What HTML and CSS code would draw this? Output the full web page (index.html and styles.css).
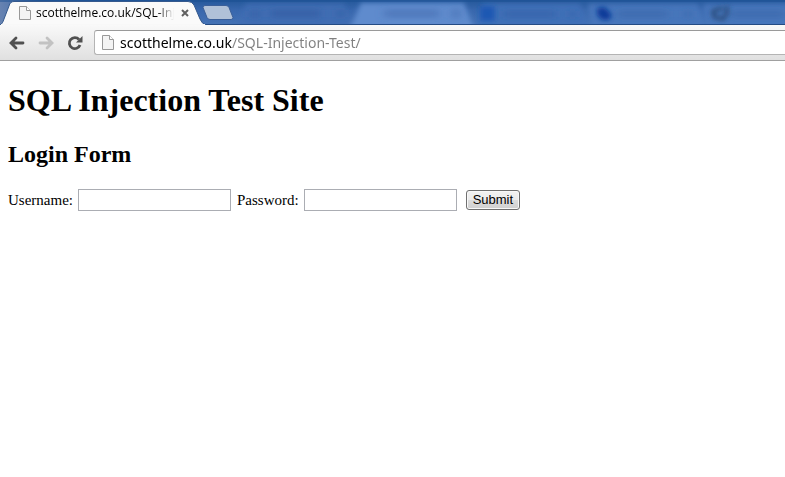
FILE: index.html
```html
<!DOCTYPE html>
<html lang="en">
<head>
<meta charset="utf-8">
<meta name="viewport" content="width=device-width, initial-scale=1">
<title>SQL Injection Test Site</title>
<link rel="stylesheet" href="styles.css">
</head>
<body>
<header class="browser">
  <div class="tabstrip">
    <svg class="backdrop" width="1600" height="25" viewBox="0 0 1600 25" aria-hidden="true">
      <defs>
        <filter id="soft" x="-20%" y="-50%" width="140%" height="200%"><feGaussianBlur stdDeviation="2.5"/></filter>
        <filter id="smudge" x="-40%" y="-80%" width="180%" height="260%"><feGaussianBlur stdDeviation="4 3"/></filter>
        <linearGradient id="left" x1="0" x2="1"><stop offset="0" stop-color="#6783b1"/><stop offset="1" stop-color="#6783b1" stop-opacity="0"/></linearGradient>
      </defs>
      <g filter="url(#soft)">
        <path d="M236 29L246 4H344L354 29z" fill="#3f6db3"/>
        <path d="M350 29L361 3H464L474 29z" fill="#5e8bcd"/>
        <path d="M474 29L484 4H580L590 29z" fill="#3f6fb7"/>
        <path d="M592 29L588 4H698L706 29z" fill="#4676bb"/>
        <path d="M707 29L703 4H1600V29z" fill="#4676bb"/>
      </g>
      <g filter="url(#smudge)">
        <path d="M250 11H260V17H250zM271 10H320V17H271zM337 10H344V17H337z" fill="#2d579c" opacity=".6"/>
        <path d="M384 10H439V17H384zM452 9H460V18H452z" fill="#3f68ab" opacity=".6"/>
        <path d="M503 11H556V17H503zM569 11H576V17H569z" fill="#2b579f" opacity=".5"/>
        <path d="M617 11H668V17H617zM684 11H692V17H684zM730 11H785V17H730z" fill="#315d9f" opacity=".5"/>
      </g>
      <g filter="url(#soft)">
        <path d="M480 6H495V21H480z" fill="#1d58b3"/>
        <path d="M597 8L605 7L612 15L609 20H602L597 15z" fill="#073a99"/>
        <path d="M723 8L713 11L714 17L723 19L727 13V6" fill="none" stroke="#24436f" stroke-width="3"/>
      </g>
      <path d="M0 0H40V25H0z" fill="url(#left)"/>
      <path d="M0 0H1600V2H0z" fill="#194e91" opacity=".45"/>
      <path d="M0 24H1600V25H0z" fill="#244b83"/>
    </svg>
    <div class="tab">
      <svg class="tab-shape" width="206" height="25" viewBox="0 0 206 25" aria-hidden="true">
        <path d="M0 25C2 24 3 22 4 19L9 6Q10 1.500 14 1.500H188Q192 1.500 194 5L200 19Q202 24 206 25z" fill="#fafafa" stroke="#35598d" stroke-width="1"/>
        <path d="M1 24.500H205" stroke="#f8f8f8"/>
      </svg>
      <svg class="page-icon" width="12" height="14" viewBox="0 0 12 14" aria-hidden="true"><path d="M.5.500H7.500L11.500 4.500V13.500H.5z" fill="#f4f4f4" stroke="#999"/><path d="M7.500.500V4.500H11.500" fill="#fff" stroke="#999"/></svg>
      <span class="tab-title">scotthelme.co.uk/SQL-Injection-Test/</span>
      <button class="tab-close" type="button" aria-label="Close tab"><svg width="8" height="8" viewBox="0 0 8 8"><path d="M1 1L7 7M7 1L1 7" stroke="#606060" stroke-width="2"/></svg></button>
    </div>
    <button class="new-tab" type="button" aria-label="New tab"><svg width="32" height="15" viewBox="0 0 32 15"><path d="M3 .5H24Q26 .5 27 2.500L31 12.500Q31 14.500 29 14.500H8Q6 14.500 5 12.500L1 2.500Q1 .5 3 .5z" fill="#b0c1d8" stroke="#3a5f99"/></svg></button>
  </div>
  <nav class="toolbar" aria-label="Navigation">
    <button class="nav-button" type="button" aria-label="Back"><svg width="16" height="14" viewBox="0 0 16 14"><path d="M7 2L2 7L7 12M2.500 7H14" fill="none" stroke="#505050" stroke-width="2.800" stroke-linecap="round"/></svg></button>
    <button class="nav-button" type="button" aria-label="Forward" disabled><svg width="16" height="14" viewBox="0 0 16 14"><path d="M9 2L14 7L9 12M13.500 7H2" fill="none" stroke="#c2c2c2" stroke-width="2.800" stroke-linecap="round"/></svg></button>
    <button class="nav-button" type="button" aria-label="Reload"><svg width="16" height="16" viewBox="0 0 16 16"><path d="M12 4.500A5.500 5.500 0 1 0 13 10" fill="none" stroke="#505050" stroke-width="2.800"/><path d="M15.500 1V7.500H9z" fill="#505050"/></svg></button>
    <div class="omnibox">
      <svg class="page-icon" width="12" height="15" viewBox="0 0 12 15" aria-hidden="true"><path d="M.5.500H7.500L11.500 4.500V14.500H.5z" fill="#f4f4f4" stroke="#999"/><path d="M7.500.500V4.500H11.500" fill="#fff" stroke="#999"/></svg>
      <input class="address" type="text" aria-label="Address" value="scotthelme.co.uk/SQL-Injection-Test/" spellcheck="false">
    </div>
  </nav>
</header>
<main class="page">
  <h1>SQL Injection Test Site</h1>
  <h2>Login Form</h2>
  <form class="login">
    <label for="username">Username:</label>
    <input class="field" id="username" type="text">
    <label for="password">Password:</label>
    <input class="field" id="password" type="password">
    <button class="submit" type="submit">Submit</button>
  </form>
</main>
</body>
</html>
```
FILE: styles.css
```css
* { box-sizing: border-box; }
body {
  margin: 0;
  background: #fff;
  color: #000;
  font-family: "Liberation Serif", serif;
  font-size: 15px;
}
svg { display: block; flex: none; }
button { font: inherit; }

.tabstrip {
  position: relative;
  display: flex;
  height: 25px;
  overflow: hidden;
  background: linear-gradient(#24589a, #3867ad 40%, #4472b5);
}
.backdrop { position: absolute; left: 0; top: 0; }
.tab {
  position: relative;
  display: flex;
  align-items: center;
  flex: none;
  width: 202px;
  padding: 1px 13px 0 19px;
}
.tab-shape { position: absolute; left: 0; top: 0; }
.tab .page-icon, .tab-title, .tab-close { position: relative; }
.tab-title {
  flex: 1;
  margin-left: 5px;
  overflow: hidden;
  white-space: nowrap;
  font: 12px/20px "Open Sans", sans-serif;
  -webkit-mask-image: linear-gradient(90deg, #000 88%, transparent);
  mask-image: linear-gradient(90deg, #000 88%, transparent);
}
.tab-close {
  flex: none;
  margin-left: 7px;
  padding: 0;
  border: 0;
  background: none;
}
.new-tab {
  position: relative;
  align-self: center;
  padding: 0;
  border: 0;
  background: none;
}

.toolbar {
  display: flex;
  align-items: center;
  height: 36px;
  padding-left: 9px;
  border-bottom: 1px solid #a0a0a0;
  background: linear-gradient(#f9f9f9, #e0e0e0);
}
.nav-button {
  flex: none;
  width: 29px;
  padding: 0;
  border: 0;
  background: none;
}
.omnibox {
  display: flex;
  align-items: center;
  flex: 1;
  min-width: 0;
  height: 25px;
  margin-left: -2px;
  padding-left: 7px;
  border: 1px solid #b4b4b4;
  border-top-color: #9a9a9a;
  border-right: 0;
  border-radius: 3px 0 0 3px;
  background: #fff;
}
.address {
  flex: 1;
  min-width: 0;
  margin-left: 6px;
  padding: 0;
  border: 0;
  outline: 0;
  background: linear-gradient(90deg, #000 112px, #808080 112px);
  -webkit-background-clip: text;
  background-clip: text;
  color: transparent;
  caret-color: #000;
  font: 14px/22px "Noto Sans", sans-serif;
}

.page { padding: 0 8px; }
h1 { margin: 21px 0; font-size: 32px; line-height: 37px; }
h2 { margin: 21px 0; font-size: 24px; line-height: 28px; }
.login { display: flex; align-items: center; }
.field {
  width: 153px;
  height: 22px;
  margin: 0 6px 0 5px;
  padding: 2px;
  border: 1px solid #abadb3;
  background: #fff;
}
.submit {
  height: 20px;
  margin-left: 3px;
  padding: 0 6px;
  border: 1px solid #707070;
  border-radius: 3px;
  background: linear-gradient(#f2f2f2, #ebebeb 50%, #ddd 50%, #cfcfcf);
  box-shadow: inset 0 0 0 1px #f8f8f8;
  color: #000;
  font: 13px/18px "Liberation Sans", sans-serif;
}
```
